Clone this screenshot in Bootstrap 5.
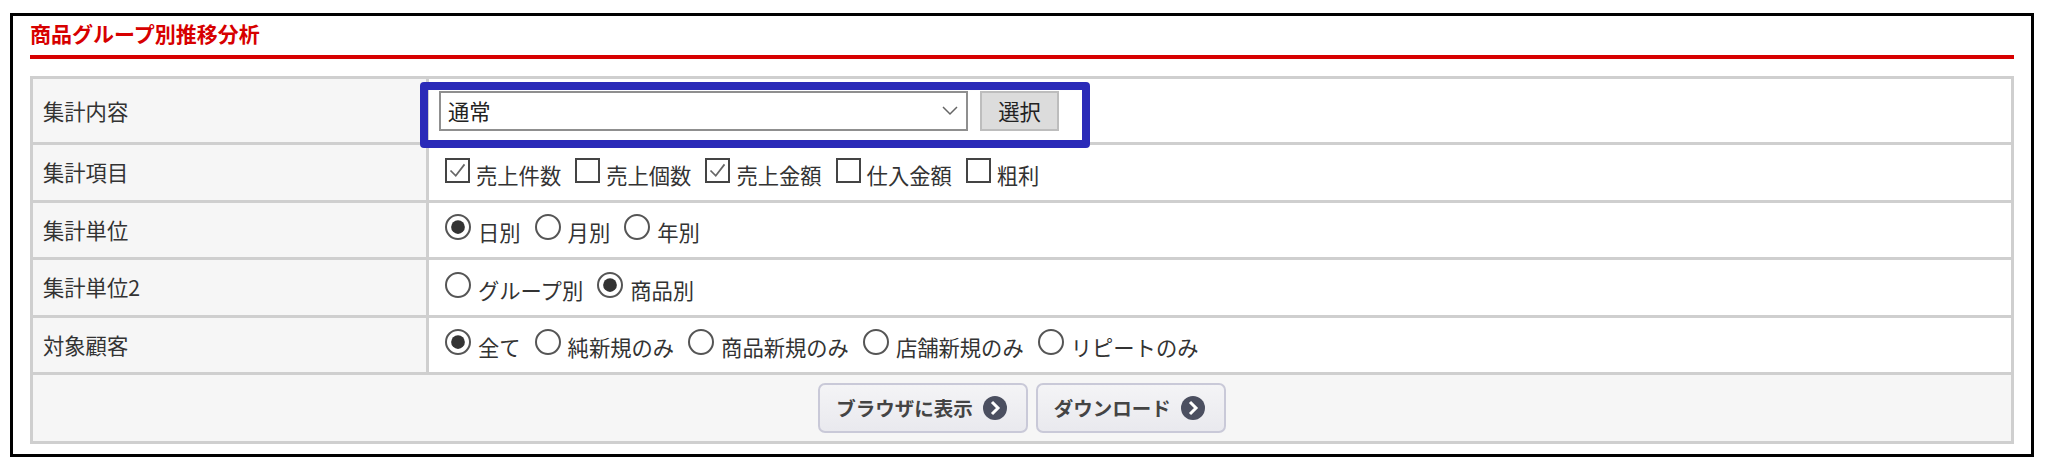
<!DOCTYPE html>
<html lang="ja">
<head>
<meta charset="UTF-8">
<title>商品グループ別推移分析</title>
<link href="https://cdn.jsdelivr.net/npm/bootstrap@5.3.2/dist/css/bootstrap.min.css" rel="stylesheet">
<style>
body { background: #fff; font-family: "Noto Sans CJK JP", "Liberation Sans", sans-serif; font-size: 21.3px; color: #333; }
.frame { margin: 13px 18px 0 10px; border: 3px solid #000; padding: 0 17px 10px 17px; }
.frame-title { color: #d70000; font-size: 21px; font-weight: 700; line-height: 30px; padding-top: 2px; height: 43px; border-bottom: 4px solid #d70000; margin: 0 0 17px 0; }
.form-tbl { border-collapse: collapse; width: 100%; margin: 0; --bs-table-border-color: #cfcfcf; border: 3px solid #cfcfcf; }
.form-tbl td, .form-tbl th { border: 3px solid #cfcfcf; padding: 0; vertical-align: middle; color: #333; font-size: 21.3px; box-shadow: none; }
.form-tbl th { width: 396px; padding-left: 10px; font-weight: 400; background: #f6f6f6; }
.form-tbl tr { height: 57.5px; }
.form-tbl tr.row-top { height: 66px; }
.form-tbl td.cell-opts { padding-left: 16px; position: relative; }
.form-tbl td.cell-foot { background: #f6f6f6; height: 69px; }
.sel-line { margin-left: -6px; }
.blue-box { position: absolute; left: -9px; top: 3px; width: 670px; height: 66px; border: 8px solid #2a2ab8; border-radius: 4px; pointer-events: none; }
.sel-plain.form-select { width: 529px; height: 40px; padding: 0 30px 0 7px; font-size: 21.3px; color: #222; border: 2px solid #8f8f8f; border-radius: 0; background-image: url("data:image/svg+xml,%3csvg xmlns='http://www.w3.org/2000/svg' viewBox='0 0 16 10'%3e%3cpath fill='none' stroke='%23666' stroke-width='1.5' d='M1 1l7 7 7-7'/%3e%3c/svg%3e"); background-position: right 8px center; background-size: 16px 10px; }
.sel-btn { width: 79px; height: 40px; padding: 0; font-size: 21.3px; color: #222; background: #dcdcdc; border: 2px solid #bdbdbd; border-radius: 0; }
.opt-row { gap: 14px; padding-top: 5px; }
.opt-item { display: flex; align-items: flex-start; gap: 4px; line-height: 30px; margin: 0; white-space: nowrap; }
.opt-item .form-check-input { flex: none; float: none; margin: 0; background-color: #fff; box-shadow: none; }
.opt-item .form-check-input[type=checkbox] { width: 25px; height: 25px; border: 2px solid #444; border-radius: 0; margin-top: -2px; margin-right: 2px; }
.opt-item .form-check-input[type=checkbox]:checked { background-image: url("data:image/svg+xml,%3csvg xmlns='http://www.w3.org/2000/svg' viewBox='0 0 24 24'%3e%3cpath fill='none' stroke='%23666' stroke-width='2' d='M4 12l6 6L20 5'/%3e%3c/svg%3e"); background-size: 100% 100%; }
.opt-item .form-check-input[type=radio] { width: 26px; height: 26px; border: 2px solid #555; margin-top: -3px; margin-right: 3px; }
.opt-item .form-check-input[type=radio]:checked { background-image: url("data:image/svg+xml,%3csvg xmlns='http://www.w3.org/2000/svg' viewBox='0 0 24 24'%3e%3ccircle cx='12' cy='12' r='7.5' fill='%23333'/%3e%3c/svg%3e"); background-size: 100% 100%; }
.act-btn { display: inline-flex; align-items: center; gap: 10px; height: 50px; padding: 0 19px 0 16px; font-size: 19.5px; font-weight: 700; color: #444; border: 2px solid #c9c9d8; border-radius: 7px; background: linear-gradient(#f4f4f6, #e9e9ee); }
.act-btn svg { width: 24px; height: 24px; }
</style>
</head>
<body>
<div class="frame">
    <h1 class="frame-title">商品グループ別推移分析</h1>

    <table class="table form-tbl">
        <tr class="row-top">
            <th>集計内容</th>
            <td class="cell-opts">
                <div class="d-flex align-items-center gap-2 sel-line">
                    <select class="form-select sel-plain"><option>通常</option></select>
                    <button type="button" class="btn sel-btn ms-1">選択</button>
                </div>
                <div class="blue-box"></div>
            </td>
        </tr>
        <tr>
            <th>集計項目</th>
            <td class="cell-opts">
                <div class="d-flex opt-row">
                    <label class="opt-item"><input class="form-check-input" type="checkbox" checked>売上件数</label>
                    <label class="opt-item"><input class="form-check-input" type="checkbox">売上個数</label>
                    <label class="opt-item"><input class="form-check-input" type="checkbox" checked>売上金額</label>
                    <label class="opt-item"><input class="form-check-input" type="checkbox">仕入金額</label>
                    <label class="opt-item"><input class="form-check-input" type="checkbox">粗利</label>
                </div>
            </td>
        </tr>
        <tr>
            <th>集計単位</th>
            <td class="cell-opts">
                <div class="d-flex opt-row">
                    <label class="opt-item"><input class="form-check-input" type="radio" name="unit" checked>日別</label>
                    <label class="opt-item"><input class="form-check-input" type="radio" name="unit">月別</label>
                    <label class="opt-item"><input class="form-check-input" type="radio" name="unit">年別</label>
                </div>
            </td>
        </tr>
        <tr>
            <th>集計単位2</th>
            <td class="cell-opts">
                <div class="d-flex opt-row">
                    <label class="opt-item"><input class="form-check-input" type="radio" name="unit2">グループ別</label>
                    <label class="opt-item"><input class="form-check-input" type="radio" name="unit2" checked>商品別</label>
                </div>
            </td>
        </tr>
        <tr>
            <th>対象顧客</th>
            <td class="cell-opts">
                <div class="d-flex opt-row">
                    <label class="opt-item"><input class="form-check-input" type="radio" name="cust" checked>全て</label>
                    <label class="opt-item"><input class="form-check-input" type="radio" name="cust">純新規のみ</label>
                    <label class="opt-item"><input class="form-check-input" type="radio" name="cust">商品新規のみ</label>
                    <label class="opt-item"><input class="form-check-input" type="radio" name="cust">店舗新規のみ</label>
                    <label class="opt-item"><input class="form-check-input" type="radio" name="cust">リピートのみ</label>
                </div>
            </td>
        </tr>
        <tr>
            <td colspan="2" class="cell-foot">
                <div class="d-flex justify-content-center gap-2">
                    <button type="button" class="btn act-btn">ブラウザに表示
                        <svg viewBox="0 0 24 24"><circle cx="12" cy="12" r="12" fill="#4b4f60"/><path d="M9 6l6 6-6 6" fill="none" stroke="#fff" stroke-width="3"/></svg>
                    </button>
                    <button type="button" class="btn act-btn">ダウンロード
                        <svg viewBox="0 0 24 24"><circle cx="12" cy="12" r="12" fill="#4b4f60"/><path d="M9 6l6 6-6 6" fill="none" stroke="#fff" stroke-width="3"/></svg>
                    </button>
                </div>
            </td>
        </tr>
    </table>
</div>
<script src="https://cdn.jsdelivr.net/npm/bootstrap@5.3.2/dist/js/bootstrap.bundle.min.js"></script>
</body>
</html>
